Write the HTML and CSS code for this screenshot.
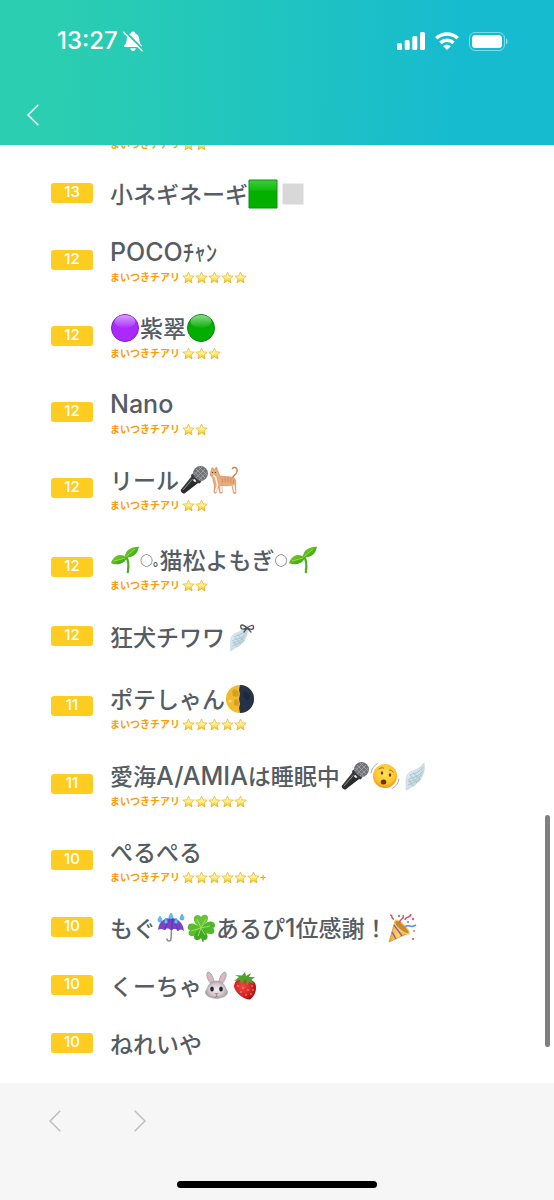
FILE: index.html
```html
<!DOCTYPE html>
<html lang="ja">
<head>
<meta charset="utf-8">
<meta name="viewport" content="width=device-width, initial-scale=1">
<title>まいつきチアリ</title>
<link rel="stylesheet" href="styles.css">
</head>
<body>
<svg class="sprite" aria-hidden="true">
  <defs>
    <linearGradient id="g-star" x1="0" y1="0" x2="0" y2="1"><stop offset="0" stop-color="#fff9c9"/><stop offset=".55" stop-color="#ffee85"/><stop offset="1" stop-color="#efb400"/></linearGradient>
    <linearGradient id="g-square" x1="0" y1="0" x2="0" y2="1"><stop offset="0" stop-color="#43c943"/><stop offset=".35" stop-color="#12bd0c"/><stop offset=".4" stop-color="#05af00"/><stop offset="1" stop-color="#05af00"/></linearGradient>
    <linearGradient id="g-gloss" x1="0" y1="0" x2="0" y2="1"><stop offset="0" stop-color="#fff" stop-opacity=".55"/><stop offset="1" stop-color="#fff" stop-opacity=".03"/></linearGradient>
    <linearGradient id="g-leaf" x1="0" y1="0" x2="1" y2="1"><stop offset="0" stop-color="#85d52c"/><stop offset="1" stop-color="#299b14"/></linearGradient>
    <linearGradient id="g-wing" x1="0" y1="0" x2="1" y2="1"><stop offset="0" stop-color="#edf5f9"/><stop offset="1" stop-color="#b3ccd8"/></linearGradient>
    <radialGradient id="g-face" cx=".5" cy=".4" r=".6"><stop offset="0" stop-color="#ffe356"/><stop offset=".7" stop-color="#fcc52e"/><stop offset="1" stop-color="#ed9519"/></radialGradient>
    <radialGradient id="g-rabbit" cx=".5" cy=".5" r=".55"><stop offset="0" stop-color="#f2edf0"/><stop offset=".6" stop-color="#d2c8cd"/><stop offset="1" stop-color="#a1989e"/></radialGradient>
    <radialGradient id="g-berry" cx=".4" cy=".4" r=".65"><stop offset="0" stop-color="#ef4a43"/><stop offset=".6" stop-color="#d72328"/><stop offset="1" stop-color="#a11219"/></radialGradient>
    <linearGradient id="g-mic" x1="0" y1="0" x2="1" y2="1"><stop offset="0" stop-color="#858585"/><stop offset=".45" stop-color="#303032"/><stop offset="1" stop-color="#161617"/></linearGradient>
    <linearGradient id="g-party" x1="0" y1="0" x2="1" y2="0"><stop offset="0" stop-color="#e8a728"/><stop offset=".5" stop-color="#ffdf5e"/><stop offset="1" stop-color="#d18b16"/></linearGradient>
  </defs>
  <symbol id="star" viewBox="0 0 26 26"><path d="M13 2l3.200 7.600 8.300.7-6.300 5.400 1.900 8.100-7.100-4.300-7.100 4.300 1.900-8.100-6.300-5.400 8.300-.7z" fill="url(#g-star)" stroke="#e0ab24" stroke-width="1.300" stroke-linejoin="round"/></symbol>
  <symbol id="green-square" viewBox="0 0 30 30"><path d="M1 1h28v28H1z" fill="url(#g-square)" stroke="#079607"/></symbol>
  <symbol id="grey-square" viewBox="0 0 30 30"><path d="M4.500 4.500h21v21h-21z" fill="#d8d8d8"/></symbol>
  <symbol id="purple-circle" viewBox="0 0 30 30"><circle cx="15" cy="15" r="13.500" fill="#a92afb" stroke="#8322c4"/><ellipse cx="15" cy="8.500" rx="10.500" ry="6.500" fill="url(#g-gloss)"/></symbol>
  <symbol id="green-circle" viewBox="0 0 30 30"><circle cx="15" cy="15" r="13.500" fill="#04ae00" stroke="#07890a"/><ellipse cx="15" cy="8.500" rx="10.500" ry="6.500" fill="url(#g-gloss)"/></symbol>
  <symbol id="mic" viewBox="0 0 30 30"><path d="M14 9.500l7 7L5.500 28.500c-1.500.6-4.500-2.100-3.700-3.700z" fill="url(#g-mic)"/><path d="M4 25L15 12.500" stroke="#8d8d90" stroke-width="1"/><circle cx="21.500" cy="8.500" r="7.500" fill="#717376"/><path d="M17 4l9 9M15.500 7l8 8M20 2l8 8M17 13l9-9M20 15l8-8M15 10l8-8" stroke="#a5a7aa" stroke-width=".8"/><path d="M13.500 8.500c1.500 3.500 4.500 6.700 9 8l-2 2c-4.500-.7-8-4.500-8.500-8.500z" fill="#37383b"/><path d="M14.500 14.500l2.200 2.200" stroke="#eee" stroke-width="1.800"/></symbol>
  <symbol id="cat" viewBox="0 0 30 30"><path d="M23.500 13.500c-.5-3 4.800-3.300 4.700-8 0-3.300-3.500-3.800-4.800-2" fill="none" stroke="#c98453" stroke-width="1.500" stroke-linecap="round"/><path d="M2 6l1-3.500 2.300 2 2.200-2.500 1.200 3.500c1.200 2 1 4.500 3 5.500 3.800 1 8 .2 11.600 1.200 3.500 1 3.500 4 3.300 6.800l.4 8.500c.2 1.500-2.600 1.500-2.700 0L23 20c-3.500 1-7 .8-10 .4l.2 6.900c0 1.400-2.400 1.400-2.500 0L9 20.500l-1.600 7c-.4 1.300-2.700.8-2.400-.6l.3-6.900c-1-3-1.600-5.600-1.500-8-2-.5-3-1.500-2.300-3z" fill="#e6ac7c" stroke="#bf7c49" stroke-width=".5"/><path d="M4 10.500c2 .5 3 1.500 3 3.500l1.500 6-2 7M12 21l.2 6M24.500 20l1.300 7" fill="none" stroke="#fbefe6" stroke-width="1.700"/><path d="M13 12.500l.6 5M16 12.500l.4 5M19 12.500l.2 5M22 13l-.3 5M25 14.500l-.8 4" stroke="#cd8450" stroke-width=".8"/><circle cx="3.500" cy="7.500" r=".6" fill="#333"/><circle cx="6.500" cy="7.500" r=".6" fill="#333"/></symbol>
  <symbol id="seedling" viewBox="0 0 30 30"><path d="M15.800 11c3 4 3.200 9 2 16.200" fill="none" stroke="#49ad24" stroke-width="2.200" stroke-linecap="round"/><path d="M15 12.500C15 5 20 2.500 29 1.500c-1 6-4.500 11.500-14 11z" fill="url(#g-leaf)"/><path d="M17 13C12 8 4 9 1 18c4 2.500 12.500 2 16-5z" fill="url(#g-leaf)"/><path d="M15.500 12L25 4M15 13L4 16" stroke="#b1e761" stroke-width=".7"/></symbol>
  <symbol id="wing" viewBox="0 0 30 30"><path d="M24 2c1 7-.5 12-3 15 0 2-2 4-4 5-2 3-4 3-6 4-2 2-4 3-5 3 0-3 .5-5 0-8 0-8 3-10 7-11 5-2 8-4 11-8z" fill="url(#g-wing)" stroke="#c0d5de" stroke-width=".7"/><path d="M23 6c-3 5-8 6-13 8M23 10c-4 5-8 6-14 8M21 14c-3 4-7 5-13 7M20 18c-4 3-8 4-12 6M13 12l7 6M10 14l7 8M8 18l5 7" fill="none" stroke="#9bb8c5" stroke-width=".7"/></symbol>
  <symbol id="wing-bow" viewBox="0 0 30 30"><use href="#wing" width="28" height="29" y="1"/><path d="M22 6c-5-5-7-3-6 0 .7 2 3.500 1 6 0 5-4 7-3 6.500 0-.5 2.500-4 1-6.500 0l-3 4m3-4l4 4" fill="none" stroke="#52575d" stroke-width="1.400" stroke-linecap="round"/></symbol>
  <symbol id="moon" viewBox="0 0 30 30"><circle cx="15" cy="15" r="14" fill="#f2bb29"/><path d="M15 1a14 14 0 0 1 0 28l-1-5 1-4-1-5 1-5-1-4z" fill="#24324a"/><path d="M7 8l2-3 4 2 1 4-3 2-3-1zM9 16l3-1 2 3-1 4-4-1z" fill="#c89128" opacity=".7"/><circle cx="5" cy="17" r="1.500" fill="#fae08a"/><path d="M19 7l4 2 2 5-3 3-4-5z" fill="#131d30" opacity=".5"/></symbol>
  <symbol id="face" viewBox="0 0 30 30"><circle cx="15" cy="15" r="12" fill="url(#g-face)"/><ellipse cx="12" cy="12" rx="1.200" ry="1.800" fill="#5d3714"/><ellipse cx="20" cy="14" rx="1.200" ry="1.800" fill="#5d3714"/><ellipse cx="13.500" cy="21" rx="2.800" ry="2.500" fill="#673217"/><path d="M9 8c1.500-1.200 3-1.500 4.500-1M19.500 9c1.500 0 2.500.7 3.500 2" fill="none" stroke="#9e621b" stroke-width="1" stroke-linecap="round"/><path d="M1 12c.5-4 3-7.500 6.500-9.500M29 18c-.5 4-3 7.500-6.500 9.500" fill="none" stroke="#98a0a6" stroke-width=".9" stroke-linecap="round"/></symbol>
  <symbol id="umbrella" viewBox="0 0 30 30"><path d="M16 8l-1 18c-.2 2.600-4.200 2.500-4 0" fill="none" stroke="#898993" stroke-width="1.500" stroke-linecap="round"/><path d="M2 17C3 8 8 5 16 5c7 1 11 5 12 13-2-2-4-2-6 0-2-2.500-4-2.500-7-.5-2-2.500-5-2.500-6.500-.2C6 15.500 4 15.500 2 17z" fill="#7d43c3"/><path d="M16 5c-4 3-6 7-7 12M16 5c3 4 5 8 6 13M16 5v12" stroke="#522b96" fill="none" stroke-width=".7"/><path d="M4 3c3 4 2.300 6 0 6s-3-2 0-6zM15 0c3 4 2.300 6 0 6s-3-2 0-6zM26 1c3 4 2.300 6 0 6s-3-2 0-6zM10 5c2.500 4 2 5.500 0 5.500S7.500 9 10 5zM20 5c2.500 4 2 5.500 0 5.500s-2.500-1.500 0-5.500z" fill="#61bdf3" stroke="#268cdf" stroke-width=".5"/></symbol>
  <symbol id="clover" viewBox="0 0 30 30"><path d="M15 15c0 5 .5 9 2 13" stroke="#4da22c" stroke-width="1.800" fill="none" stroke-linecap="round"/><path d="M15 15C9 12 6 6 9 3c2-2 5-1 6 1 2-3 7-3 7 1 0 4-4 7-7 10z" fill="#65c534"/><path d="M15 15c4-6 10-8 13-5 2 2 1 5-1 5 3 2 1 7-3 6-4 0-7-3-9-6z" fill="#50b72b"/><path d="M15 15c-6-5-12-6-13-2-1 2 0 4 2 4-3 3-1 7 3 6 4 0 6-4 8-8z" fill="#57bd2d"/><path d="M15 15c5 3 8 8 6 11-2 2-5 1-6-1-2 3-7 3-7-1 0-3 4-6 7-9z" fill="#43a925"/><path d="M15 15L11 6M15 15l9-2M15 15l-10 3M15 15l-3 8M15 15l4 7M15 15l5-9" stroke="#a1e26c" stroke-width=".9"/></symbol>
  <symbol id="party" viewBox="0 0 30 30"><path d="M8 8l14 12L2 29z" fill="url(#g-party)" stroke="#b87521" stroke-width=".5"/><path d="M7 12l8 11M5 19l4 7" stroke="#9952c0" stroke-width="1.500"/><path d="M8 8c1-2 5 0 9 4 4 4 6 7 5 9-3 0-8-3-11-6-3-3-4-5-3-7z" fill="#c98a30" stroke="#f7cf56" stroke-width="1.200"/><path d="M3 2c4 0 0 4 4 4M13 10c-2-4 5-3 3-8M18 7c0-4 5-1 6-6" stroke="#df4d6b" stroke-width="1.400" fill="none"/><path d="M18 14c4-4 5 2 11-2" stroke="#4d98dd" stroke-width="1.700" fill="none"/><circle cx="12" cy="3" r="1.200" fill="#5b9be4"/><circle cx="26" cy="6" r="1.200" fill="#e25a84"/><circle cx="27" cy="18" r="1.100" fill="#f08b45"/><circle cx="26" cy="26" r="1.100" fill="#de5863"/><circle cx="21" cy="9" r="1" fill="#9b5bcd"/></symbol>
  <symbol id="rabbit" viewBox="0 0 30 30"><path d="M9 13C4 7 4 2 6 1c3 0 6 6 6 11zM20 13c5-6 5-11 3-12-3 0-6 6-6 11z" fill="#c8bec4" stroke="#958b91" stroke-width=".6"/><path d="M9 11C6 6 6 4 7 3c2 2 3 5 4 8zM20 11c3-5 3-7 2-8-2 2-3 5-4 8z" fill="#e9b2bd"/><path d="M14.500 10C9 10 6 14 5 18c-4 4 0 9 9.500 9.500C24 27 28 22 24 18c-1-4-4-8-9.500-8z" fill="url(#g-rabbit)" stroke="#989096" stroke-width=".5"/><ellipse cx="10" cy="18" rx="1.800" ry="2.500" fill="#27252b"/><ellipse cx="19" cy="18" rx="1.800" ry="2.500" fill="#27252b"/><path d="M12.500 22h4l-2 2.200z" fill="#d86f83"/><path d="M14.500 24v1.500m0 0l-2 .8m2-.8l2 .8" stroke="#7e7076" stroke-width=".7"/></symbol>
  <symbol id="strawberry" viewBox="0 0 30 30"><path d="M4 10c4-4 15-4 19 2 3 6-1 14-5 16.500C13 29 4 23 2 16c0-2 .5-4 2-6z" fill="url(#g-berry)"/><path d="M14 8L9 13 8 9l-6 1 5-4-4-2 7 .5L13 1l1 4 5-3-2 4 6 0-4 3 3 4-5-2-2 4z" fill="#4da32a"/><g fill="#f8c970"><circle cx="6" cy="15" r=".7"/><circle cx="11" cy="17" r=".7"/><circle cx="20" cy="15" r=".7"/><circle cx="21" cy="19" r=".7"/><circle cx="16" cy="19" r=".7"/><circle cx="9" cy="21" r=".7"/><circle cx="14" cy="24" r=".7"/><circle cx="19" cy="23" r=".7"/></g></symbol>
</svg>

<header class="header">
  <div class="status">
    <span class="time">13:27</span>
    <svg class="bell" viewBox="0 0 20 21" aria-hidden="true"><path d="M10 .5c1.400 0 2.300.9 2.400 2 2.700 1 3.800 3.200 3.900 6 .1 3.600 1.300 4.700 2.500 6v1.500H1.200v-1.500c1.200-1.300 2.400-2.400 2.500-6 .1-2.800 1.200-5 3.900-6 .1-1.100 1-2 2.400-2zM7.300 17.200h5.400c-.2 1.700-1.200 2.800-2.700 2.800s-2.500-1.100-2.700-2.800z" fill="#fff"/><path d="M1.500 0l19 19" stroke="#2acab0" stroke-width="2.200"/><path d="M.5 1.300L19 19.700" stroke="#fff" stroke-width="1.500" stroke-linecap="round"/></svg>
    <svg class="signal" viewBox="0 0 28 18" aria-hidden="true"><g fill="#fff"><rect y="11" width="5" height="7" rx="1.500"/><rect x="7.700" y="8" width="5" height="10" rx="1.500"/><rect x="15.300" y="4" width="5" height="14" rx="1.500"/><rect x="23" width="5" height="18" rx="1.500"/></g></svg>
    <svg class="wifi" viewBox="0 0 24 18" aria-hidden="true"><g fill="none" stroke="#fff" stroke-width="3.500"><path d="M1.300 6.200c6-5.600 15.400-5.600 21.400 0"/><path d="M5.400 10.900c3.800-3.500 9.400-3.500 13.200 0"/></g><path d="M8.200 14.300c2.200-2 5.400-2 7.600 0L12 18z" fill="#fff"/></svg>
    <svg class="battery" viewBox="0 0 39 19" aria-hidden="true"><rect x=".5" y=".5" width="35" height="18" rx="5.500" fill="none" stroke="#fff" stroke-opacity=".45"/><rect x="3" y="3" width="30" height="13" rx="3.500" fill="#fff"/><path d="M37 6.500c2 .8 2 5.200 0 6z" fill="#fff" opacity=".55"/></svg>
  </div>
  <button class="back" type="button" aria-label="戻る"><svg class="chevron" viewBox="0 0 12 22" aria-hidden="true"><path d="M11.300.8L1 11l10.300 10.200"/></svg></button>
</header>

<main class="main">
  <ul class="list">
    <li class="row row-clipped"><div class="person"><p class="cheer">まいつきチアリ <svg><use href="#star"/></svg><svg><use href="#star"/></svg></p></div></li>
    <li class="row"><span class="badge">13</span><div class="person"><p class="name">小ネギネーギ<svg><use href="#green-square"/></svg><svg><use href="#grey-square"/></svg></p></div></li>
    <li class="row"><span class="badge">12</span><div class="person"><p class="name"><span class="latin">POCO</span>ﾁｬﾝ</p><p class="cheer">まいつきチアリ <svg><use href="#star"/></svg><svg><use href="#star"/></svg><svg><use href="#star"/></svg><svg><use href="#star"/></svg><svg><use href="#star"/></svg></p></div></li>
    <li class="row"><span class="badge">12</span><div class="person"><p class="name"><svg><use href="#purple-circle"/></svg>紫翠<svg><use href="#green-circle"/></svg></p><p class="cheer">まいつきチアリ <svg><use href="#star"/></svg><svg><use href="#star"/></svg><svg><use href="#star"/></svg></p></div></li>
    <li class="row"><span class="badge">12</span><div class="person"><p class="name"><span class="latin">Nano</span></p><p class="cheer">まいつきチアリ <svg><use href="#star"/></svg><svg><use href="#star"/></svg></p></div></li>
    <li class="row"><span class="badge">12</span><div class="person"><p class="name">リール<svg><use href="#mic"/></svg><svg><use href="#cat"/></svg></p><p class="cheer">まいつきチアリ <svg><use href="#star"/></svg><svg><use href="#star"/></svg></p></div></li>
    <li class="row row-tall"><span class="badge">12</span><div class="person"><p class="name"><svg><use href="#seedling"/></svg><span class="ring">○｡</span>猫松よもぎ<span class="ring">○</span><svg><use href="#seedling"/></svg></p><p class="cheer">まいつきチアリ <svg><use href="#star"/></svg><svg><use href="#star"/></svg></p></div></li>
    <li class="row"><span class="badge">12</span><div class="person"><p class="name">狂犬チワワ<svg><use href="#wing-bow"/></svg></p></div></li>
    <li class="row row-tall"><span class="badge">11</span><div class="person"><p class="name">ポテしゃん<svg><use href="#moon"/></svg></p><p class="cheer">まいつきチアリ <svg><use href="#star"/></svg><svg><use href="#star"/></svg><svg><use href="#star"/></svg><svg><use href="#star"/></svg><svg><use href="#star"/></svg></p></div></li>
    <li class="row"><span class="badge">11</span><div class="person"><p class="name">愛海<span class="latin">A/AMIA</span>は睡眠中<svg><use href="#mic"/></svg><svg><use href="#face"/></svg><svg><use href="#wing"/></svg></p><p class="cheer">まいつきチアリ <svg><use href="#star"/></svg><svg><use href="#star"/></svg><svg><use href="#star"/></svg><svg><use href="#star"/></svg><svg><use href="#star"/></svg></p></div></li>
    <li class="row"><span class="badge">10</span><div class="person"><p class="name">ぺるぺる</p><p class="cheer">まいつきチアリ <svg><use href="#star"/></svg><svg><use href="#star"/></svg><svg><use href="#star"/></svg><svg><use href="#star"/></svg><svg><use href="#star"/></svg><svg><use href="#star"/></svg>+</p></div></li>
    <li class="row"><span class="badge">10</span><div class="person"><p class="name">もぐ<svg><use href="#umbrella"/></svg><svg><use href="#clover"/></svg>あるぴ<span class="latin">1</span>位感謝！<svg><use href="#party"/></svg></p></div></li>
    <li class="row"><span class="badge">10</span><div class="person"><p class="name">くーちゃ<svg><use href="#rabbit"/></svg><svg><use href="#strawberry"/></svg></p></div></li>
    <li class="row"><span class="badge">10</span><div class="person"><p class="name">ねれいや</p></div></li>
  </ul>
  <div class="scroll-thumb"></div>
</main>

<footer class="toolbar">
  <nav class="history" aria-label="履歴">
    <button type="button" aria-label="前のページ"><svg class="chevron" viewBox="0 0 12 22" aria-hidden="true"><path d="M11.300.8L1 11l10.300 10.200"/></svg></button>
    <button type="button" aria-label="次のページ"><svg class="chevron" viewBox="0 0 12 22" aria-hidden="true"><path d="M.7.8L11 11 .7 21.200"/></svg></button>
  </nav>
  <div class="home-bar"></div>
</footer>
</body>
</html>
```
FILE: styles.css
```css
* { box-sizing: border-box; }

body {
  margin: 0;
  min-height: 100vh;
  display: flex;
  flex-direction: column;
  background: #fff;
  color: #555c63;
  font-family: "Noto Sans CJK JP", sans-serif;
}

p, ul { margin: 0; padding: 0; }
button { padding: 0; border: 0; background: none; color: inherit; display: flex; }

.sprite { position: absolute; width: 0; height: 0; }
.chevron { width: 12px; height: 22px; fill: none; stroke: currentColor; stroke-width: 1.5; }

.header {
  height: 145px;
  color: #fff;
  background: linear-gradient(92deg, #2bceb0 10%, #20c4c0 50%, #17bbcf 82%);
}

.status {
  display: flex;
  align-items: center;
  padding: 26px 46px 0 57px;
  height: 56px;
}
.time { font: 500 24px/30px Inter, sans-serif; }
.bell { width: 20px; height: 21px; margin-left: 5px; }
.signal { width: 28px; height: 18px; margin-left: auto; }
.wifi { width: 24px; height: 18px; margin-left: 10px; }
.battery { width: 39px; height: 19px; margin-left: 10px; }

.back { margin: 48px 0 0 27px; }

.main { flex: 1; position: relative; }
.list { list-style: none; padding: 0 51px; }

.row {
  display: flex;
  align-items: center;
  gap: 17px;
  min-height: 58px;
  padding: 11px 0;
}
.row-tall { min-height: 81px; }
.row-clipped {
  height: 19px;
  min-height: 0;
  padding: 0 0 10px 59px;
  align-items: flex-end;
  overflow: hidden;
}

.badge {
  flex: none;
  width: 42px;
  height: 20px;
  border-radius: 3px;
  background: #ffcc21;
  color: #fff;
  font: 500 15px/18px Inter, sans-serif;
  text-align: center;
}

.name {
  display: flex;
  align-items: center;
  font-size: 23px;
  font-weight: 500;
  line-height: 32px;
  white-space: nowrap;
}
.name:not(:last-child) { padding-top: 2px; }
.row-tall .name:not(:last-child) { padding-top: 5px; }
.name svg { flex: none; width: 30px; height: 30px; margin-top: 2px; }
.latin { font-family: Inter, sans-serif; font-size: 25px; line-height: 30px; padding-top: 2px; }
.ring { font-size: 13px; font-weight: 700; line-height: 30px; padding-top: 2px; }

.cheer {
  display: flex;
  align-items: center;
  color: #ff9c0c;
  font-size: 10px;
  font-weight: 700;
  line-height: 20px;
  white-space: pre;
}
.cheer svg { flex: none; width: 13px; height: 13px; }

.scroll-thumb {
  position: absolute;
  top: 670px;
  right: 4px;
  width: 5px;
  height: 232px;
  border-radius: 3px;
  background: #7f7f7f;
}

.toolbar {
  display: flex;
  flex-direction: column;
  justify-content: space-between;
  height: 117px;
  padding: 27px 0 12px;
  background: #f6f6f6;
}
.history { display: flex; gap: 73px; padding-left: 49px; color: #bdbdbd; }
.home-bar {
  align-self: center;
  width: 36%;
  height: 7px;
  border-radius: 4px;
  background: #000;
}
```
